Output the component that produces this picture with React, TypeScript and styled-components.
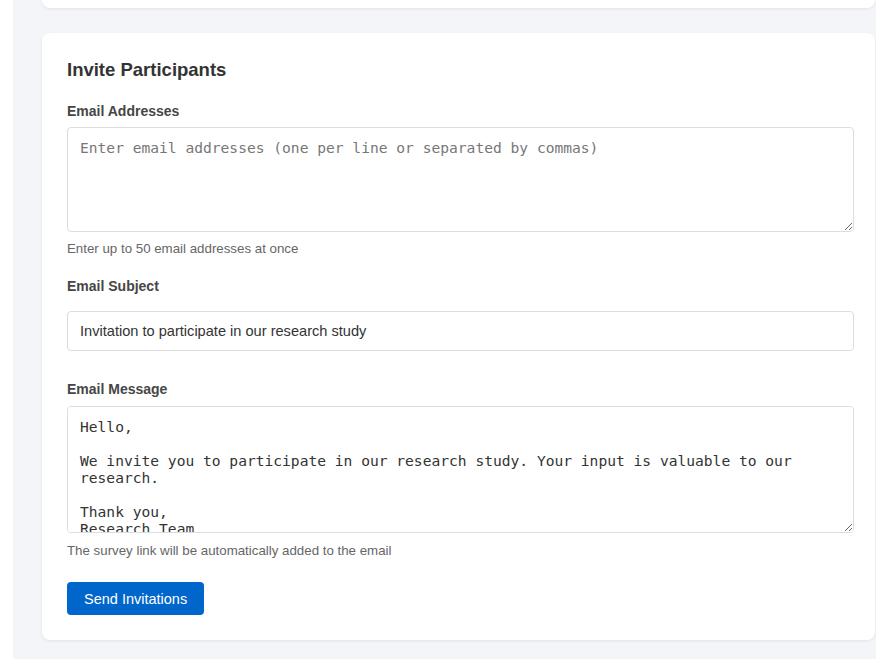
import React from "react";
import styled, { createGlobalStyle } from "styled-components";

const Global = createGlobalStyle`
  html, body { margin: 0; padding: 0; background: #ffffff; }
  body { font-family: "Liberation Sans", Arial, sans-serif; }
  * { box-sizing: border-box; }
`;

const Page = styled.div`
  margin-left: 13px;
  height: 659px;
  background: #f4f5f8;
  padding: 0 1px 0 29px;
  display: flex;
  flex-direction: column;
  gap: 25px;
  overflow: hidden;
`;

const PrevCard = styled.div`
  height: 8px;
  background: #ffffff;
  border-radius: 0 0 8px 8px;
  box-shadow: 0 1px 3px rgba(0, 0, 0, 0.08);
`;

const Card = styled.section`
  background: #ffffff;
  border-radius: 8px;
  box-shadow: 0 1px 3px rgba(0, 0, 0, 0.08);
  padding: 25px 21px 25px 25px;
  display: flex;
  flex-direction: column;
`;

const Title = styled.h2`
  margin: 0 0 20px;
  font-size: 18.5px;
  font-weight: 700;
  color: #333333;
  line-height: 24px;
`;

const Field = styled.div<{ $gap?: number }>`
  display: flex;
  flex-direction: column;
  margin-bottom: ${(p) => p.$gap ?? 20}px;
`;

const Label = styled.label<{ $gap?: number }>`
  font-size: 14px;
  font-weight: 700;
  color: #464646;
  line-height: 18px;
  margin-bottom: ${(p) => p.$gap ?? 7}px;
`;

const TextArea = styled.textarea<{ $h: number }>`
  width: 100%;
  height: ${(p) => p.$h}px;
  border: 1px solid #dddddd;
  border-radius: 4px;
  padding: 11px 12px;
  font-family: "DejaVu Sans Mono", "Liberation Mono", monospace;
  font-size: 14.6px;
  line-height: 17px;
  color: #333333;
  background: #ffffff;
  resize: vertical;
  display: block;
  &::placeholder { color: #777777; }
`;

const Input = styled.input`
  width: 100%;
  height: 40px;
  border: 1px solid #dddddd;
  border-radius: 4px;
  padding: 0 12px;
  font-family: "Liberation Sans", Arial, sans-serif;
  font-size: 14.6px;
  color: #333333;
  background: #ffffff;
  display: block;
`;

const Help = styled.div<{ $gap?: number }>`
  font-size: 13.3px;
  color: #666666;
  line-height: 16px;
  margin-top: ${(p) => p.$gap ?? 9}px;
`;

const Button = styled.button`
  align-self: flex-start;
  margin-top: 5px;
  height: 33px;
  padding: 0 17px;
  background: #0066cc;
  color: #ffffff;
  border: none;
  border-radius: 4px;
  font-family: "Liberation Sans", Arial, sans-serif;
  font-size: 14.5px;
`;

const message = `Hello,

We invite you to participate in our research study. Your input is valuable to our research.

Thank you,
Research Team`;

export default function App() {
  return (
    <>
      <Global />
      <Page>
        <PrevCard />
        <Card>
          <Title>Invite Participants</Title>
          <Field $gap={20}>
            <Label>Email Addresses</Label>
            <TextArea
              $h={105}
              placeholder="Enter email addresses (one per line or separated by commas)"
            />
            <Help>Enter up to 50 email addresses at once</Help>
          </Field>
          <Field $gap={29}>
            <Label $gap={16}>Email Subject</Label>
            <Input defaultValue="Invitation to participate in our research study" />
          </Field>
          <Field $gap={18}>
            <Label $gap={8}>Email Message</Label>
            <TextArea $h={127} defaultValue={message} />
            <Help $gap={10}>The survey link will be automatically added to the email</Help>
          </Field>
          <Button>Send Invitations</Button>
        </Card>
      </Page>
    </>
  );
}
